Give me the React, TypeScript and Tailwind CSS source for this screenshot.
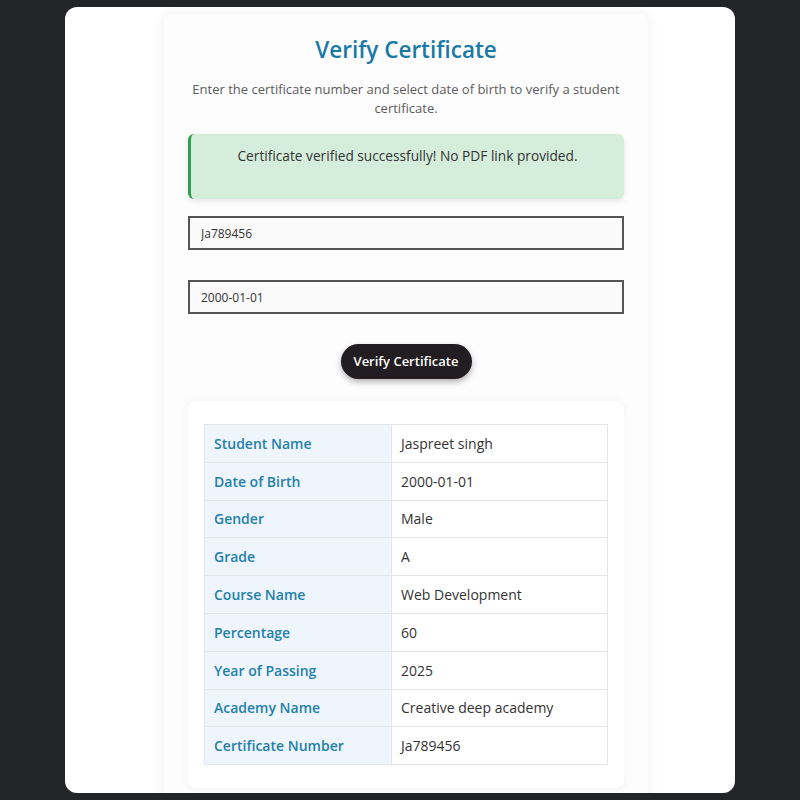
import React from 'react';

const rows = [
  { label: 'Student Name', value: 'Jaspreet singh' },
  { label: 'Date of Birth', value: '2000-01-01' },
  { label: 'Gender', value: 'Male' },
  { label: 'Grade', value: 'A' },
  { label: 'Course Name', value: 'Web Development' },
  { label: 'Percentage', value: '60' },
  { label: 'Year of Passing', value: '2025' },
  { label: 'Academy Name', value: 'Creative deep academy' },
  { label: 'Certificate Number', value: 'Ja789456' },
];

const App = () => {
  return (
    <div
      className="w-full h-[800px] bg-[#232427] pt-[7px] px-[65px] overflow-hidden"
      style={{ fontFamily: '"Open Sans", "Noto Sans", sans-serif' }}
    >
      <div className="h-[786px] bg-white rounded-xl overflow-hidden pt-[7px]">
        {/* Verify card */}
        <div className="ml-[99px] w-[484px] h-[800px] bg-[#fdfdfd] rounded-lg shadow-[0_0_14px_rgba(0,0,0,0.07)] px-[24px] pt-[20px]">
          <h1 className="text-center text-[22.5px] leading-[32px] font-semibold text-[#1b79a6]">
            Verify Certificate
          </h1>
          <p className="mt-[14px] text-center text-[13px] leading-[19px] text-[#5c5c5c]">
            Enter the certificate number and select date of birth to verify a student certificate.
          </p>

          <div className="mt-[16px] bg-[#d5eedc] border-l-[3px] border-[#2f9e4f] rounded-md shadow-[0_2px_6px_rgba(0,0,0,0.1)] pt-[12px] pb-[33px] text-center text-[13.7px] leading-[20px] text-[#333]">
            Certificate verified successfully! No PDF link provided.
          </div>

          <div className="mt-[17px] flex flex-col gap-[30px]">
            <input
              readOnly
              value="Ja789456"
              className="w-full h-[34px] border-2 border-[#555] bg-[#fafafa] px-[11px] text-[12px] text-[#333] outline-none"
            />
            <input
              readOnly
              value="2000-01-01"
              className="w-full h-[34px] border-2 border-[#555] bg-[#fafafa] px-[11px] text-[12px] text-[#333] outline-none"
            />
          </div>

          <div className="mt-[30px] flex justify-center">
            <button className="h-[35px] w-[131px] rounded-full bg-[#211d20] text-white text-[13px] font-semibold shadow-[0_3px_6px_rgba(0,0,0,0.3)]">
              Verify Certificate
            </button>
          </div>

          {/* Result */}
          <div className="mt-[22px] bg-white rounded-lg shadow-[0_0_10px_rgba(0,0,0,0.05)] px-[16px] pt-[23px] pb-[23px]">
            <table className="w-full border-collapse text-[14px]">
              <tbody>
                {rows.map((r) => (
                  <tr key={r.label} className="h-[37.8px]">
                    <td className="w-[187px] border border-[#e2e6ea] bg-[#eff5fd] px-[9px] font-semibold text-[#2380aa]">
                      {r.label}
                    </td>
                    <td className="border border-[#e2e6ea] px-[9px] text-[#333]">{r.value}</td>
                  </tr>
                ))}
              </tbody>
            </table>
          </div>
        </div>
      </div>
    </div>
  );
};

export default App;
